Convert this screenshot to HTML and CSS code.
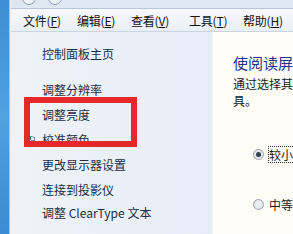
FILE: index.html
```html
<!DOCTYPE html>
<html lang="zh-CN">
<head>
<meta charset="utf-8">
<title>显示</title>
<link rel="stylesheet" href="styles.css">
</head>
<body>
<div class="screen">
  <div class="desk-edge"></div>
  <div class="frame-edge"></div>
  <div class="window">
    <div class="toolstrip">
      <span class="nav-btn back"></span>
      <span class="nav-btn fwd"></span>
    </div>
    <div class="menubar">
      <span class="menu">文件(<u>F</u>)</span>
      <span class="menu">编辑(<u>E</u>)</span>
      <span class="menu">查看(<u>V</u>)</span>
      <span class="menu">工具(<u>T</u>)</span>
      <span class="menu">帮助(<u>H</u>)</span>
    </div>
    <div class="body">
      <nav class="sidebar">
        <a class="link home">控制面板主页</a>
        <a class="link first">调整分辨率</a>
        <a class="link">调整亮度</a>
        <a class="link shielded"><svg class="shield" viewBox="0 0 8 9" width="8" height="9"><path d="M4 0 L8 1.2 V4.5 C8 7 6 8.2 4 9 C2 8.2 0 7 0 4.5 V1.2 Z" fill="#5b6f8c"/><path d="M4 0.8 V8.2 C2.3 7.5 0.8 6.4 0.8 4.5 V4.3 H7.2 V1.8 L4 0.8 Z" fill="#e8ecf2"/></svg>校准颜色</a>
        <a class="link">更改显示器设置</a>
        <a class="link second-last">连接到投影仪</a>
        <a class="link">调整 ClearType 文本</a>
      </nav>
      <main class="content">
        <h1 class="title">使阅读屏幕上的内容更容易</h1>
        <p class="desc">通过选择其中一个选项，可以更改屏幕上的文本大小以及其他项。若要暂时放大部分屏幕，请使用放大镜工<br>具。</p>
        <div class="options">
          <label class="option checked"><span class="radio"></span><span class="opt-text focus">较小 - 100% (默认)</span></label>
          <label class="option"><span class="radio"></span><span class="opt-text">中等 - 125%</span></label>
        </div>
      </main>
    </div>
  </div>
  <div class="annotation"></div>
</div>
</body>
</html>
```

FILE: styles.css
```css
html, body {
  margin: 0;
  padding: 0;
}
body {
  width: 293px;
  height: 234px;
  overflow: hidden;
  font-family: "Noto Sans CJK SC", "Microsoft YaHei", sans-serif;
  font-size: 12px;
  color: #1b1b1b;
}
.screen {
  position: relative;
  display: flex;
  width: 293px;
  height: 234px;
  overflow: hidden;
}
.desk-edge {
  width: 9px;
  flex: none;
  background: linear-gradient(to bottom, #3d8fd3, #4fa2de 50%, #3a8bd0);
}
.frame-edge {
  width: 2px;
  flex: none;
  background: #e6eef7;
  border-left: 1px solid #a9c6e3;
  box-sizing: border-box;
}
.window {
  flex: 1;
  display: flex;
  flex-direction: column;
  min-width: 0;
}
.toolstrip {
  height: 8px;
  flex: none;
  display: flex;
  align-items: flex-end;
  gap: 12px;
  padding-left: 11px;
  background: #dfe7f0;
  border-bottom: 1px solid #b7c5d6;
  overflow: hidden;
}
.nav-btn {
  width: 14px;
  height: 14px;
  flex: none;
  border-radius: 50%;
  border: 1px solid #8c9bb0;
  background: #eef2f7;
  margin-bottom: 3px;
  box-sizing: border-box;
}
.menubar {
  height: 22px;
  flex: none;
  display: flex;
  align-items: center;
  padding-left: 12px;
  background: linear-gradient(to bottom, #f7f9fc, #eaeff6);
  border-bottom: 1px solid #cbd5e2;
  white-space: nowrap;
}
.menu {
  width: 54px;
  flex: none;
  font-size: 12px;
  color: #111;
  letter-spacing: -0.2px;
}
.menu:nth-child(3) { width: 58px; }
.menu u { text-decoration: underline; }
.body {
  flex: 1;
  display: flex;
  min-height: 0;
}
.sidebar {
  width: 202px;
  flex: none;
  display: flex;
  flex-direction: column;
  padding: 14px 0 0 31px;
  box-sizing: border-box;
  background: linear-gradient(to right, #eef3f9, #e6edf6);
  border-right: 1px solid #f2f5f9;
}
.link {
  display: flex;
  align-items: center;
  height: 16px;
  line-height: 16px;
  margin-bottom: 9px;
  color: #1a2c45;
  white-space: nowrap;
  font-size: 12px;
}
.link.home { margin-bottom: 20px; }
.link.second-last { margin-bottom: 7px; }
.shielded { margin-left: -15px; }
.shield {
  flex: none;
  margin-right: 7px;
}
.content {
  flex: 1;
  min-width: 0;
  padding: 21px 0 0 20px;
  background: #fffdf6;
  white-space: nowrap;
  overflow: hidden;
}
.title {
  margin: 0;
  font-size: 15px;
  font-weight: normal;
  line-height: 20px;
  color: #1e3287;
}
.desc {
  margin: 2px 0 0;
  line-height: 17px;
  font-size: 12px;
  color: #222;
}
.options {
  display: flex;
  flex-direction: column;
  gap: 33px;
  margin-top: 37px;
  padding-left: 20px;
}
.option {
  display: flex;
  align-items: center;
  height: 17px;
}
.radio {
  width: 11px;
  height: 11px;
  flex: none;
  border-radius: 50%;
  border: 1px solid #9aa3ad;
  background: radial-gradient(circle, #f4f4f4, #d8dcdf);
  box-sizing: border-box;
  margin-right: 5px;
  position: relative;
}
.checked .radio::after {
  content: "";
  position: absolute;
  left: 2px;
  top: 2px;
  width: 5px;
  height: 5px;
  border-radius: 50%;
  background: radial-gradient(circle at 40% 40%, #3d4c5e, #1d2a3a);
}
.opt-text {
  font-size: 12px;
  color: #1b1b1b;
  line-height: 15px;
}
.focus {
  outline: 1px dotted #333;
  outline-offset: 0;
}
.annotation {
  position: absolute;
  left: 24px;
  top: 97px;
  width: 113px;
  height: 50px;
  border: 6px solid #e6282b;
  box-sizing: border-box;
}
```
